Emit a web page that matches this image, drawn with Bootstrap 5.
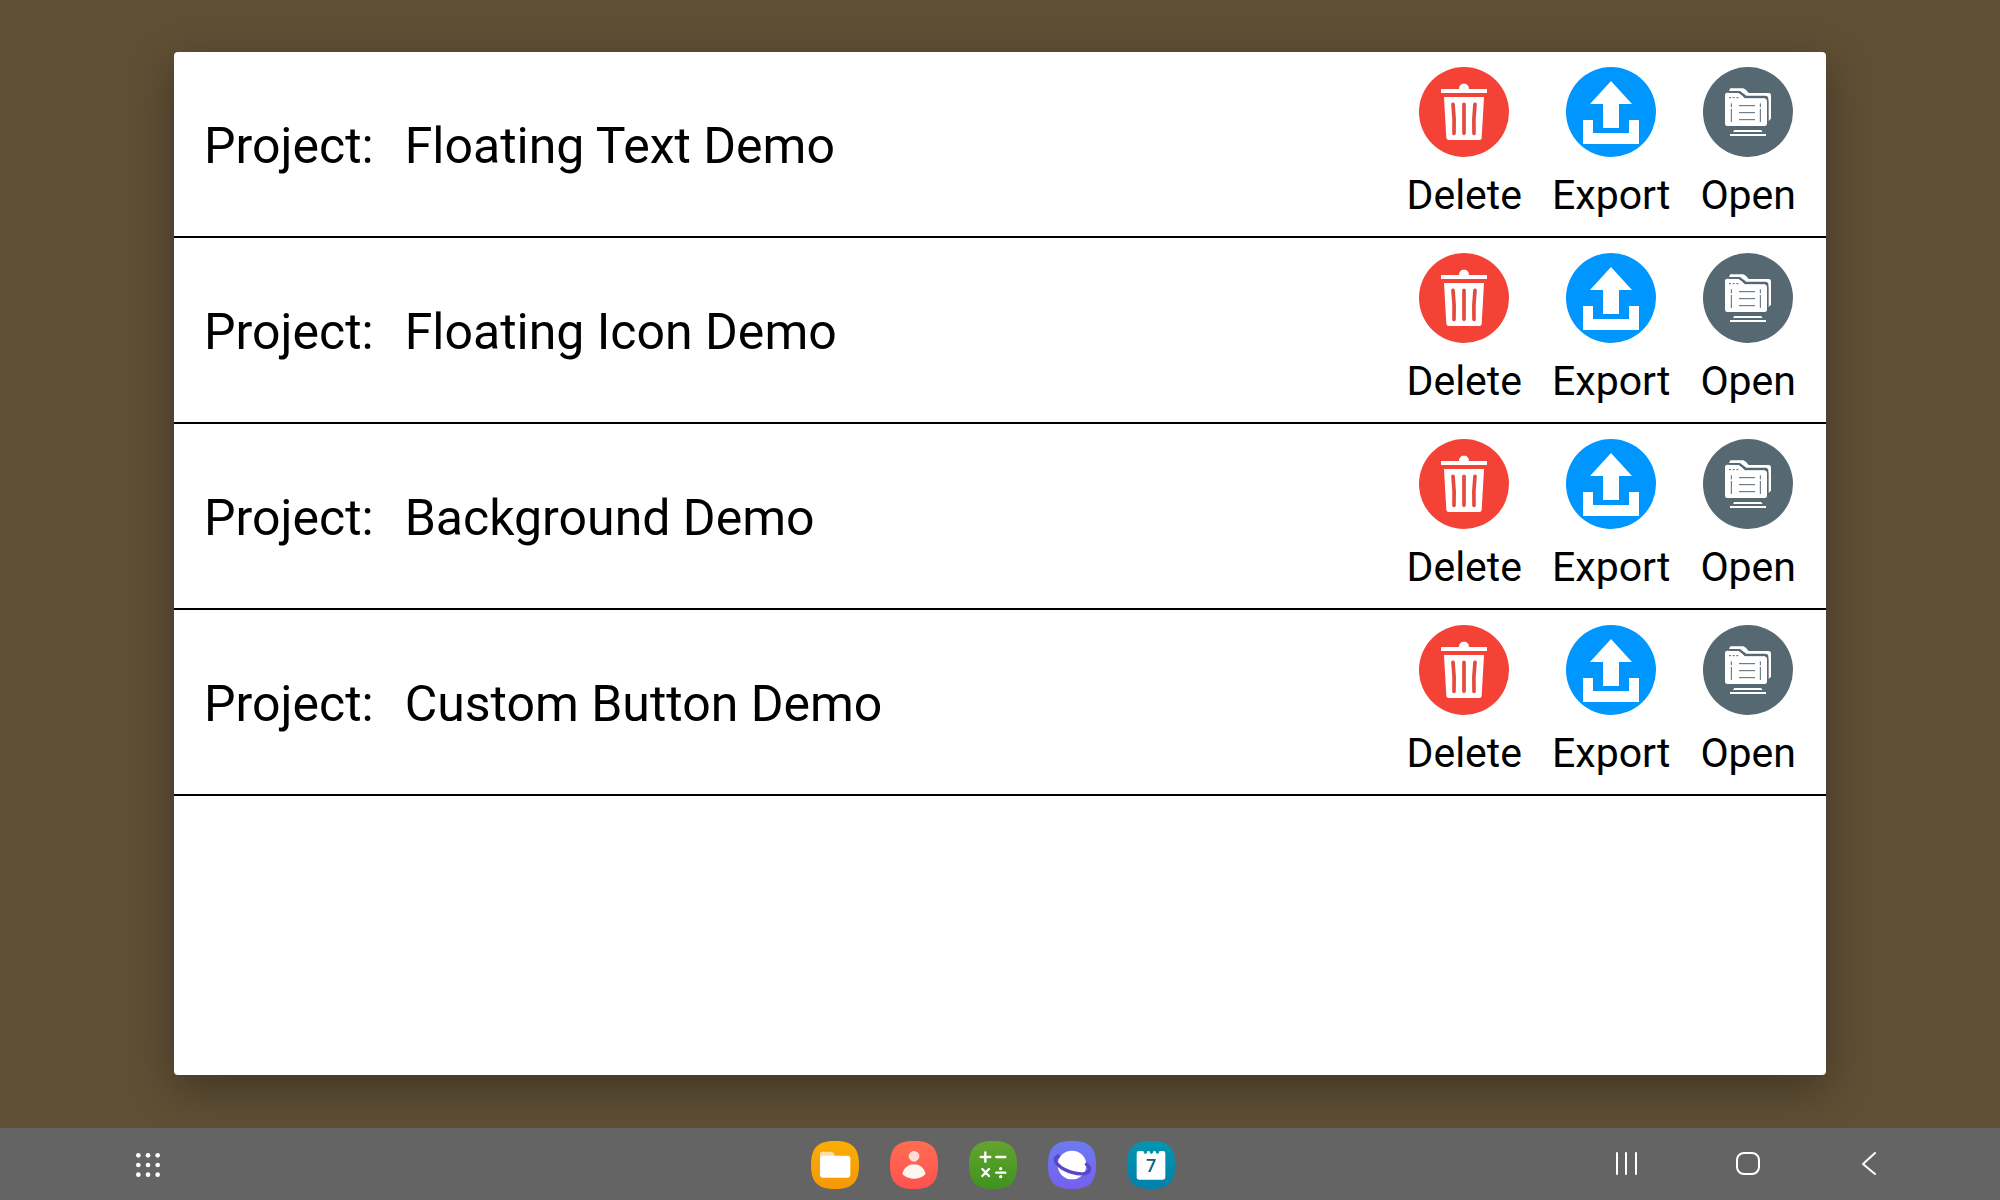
<!DOCTYPE html>
<html lang="en">
<head>
<meta charset="utf-8">
<meta name="viewport" content="width=device-width, initial-scale=1">
<title>Projects</title>
<link href="https://cdn.jsdelivr.net/npm/bootstrap@5.3.0/dist/css/bootstrap.min.css" rel="stylesheet">
<style>
  body { background: #5f4f35; font-family: Roboto, "Noto Sans", sans-serif; color: #000; }
  .stage { padding: 52px 174px 53px; }
  .panel { border-radius: 4px; box-shadow: 0 14px 46px rgba(0, 0, 0, .32); }
  .project-row { border-bottom: 2px solid #000; padding: 15px 30px 17px; gap: 30px; }
  .project-title { font-size: 50px; line-height: 60px; gap: 31px; padding-top: 6px; }
  .actions { gap: 30px; }
  .action { font-size: 41px; line-height: 47px; gap: 15px; color: #000; }
  .action svg { width: 90px; height: 90px; }
  .taskbar { background: #646464; height: 72px; padding-right: 15px; grid-template-columns: 1fr auto 1fr; }
  .side-start { padding-left: 136px; padding-top: 2px; }
  .side-end { padding-right: 104px; gap: 97px; }
  .apps { gap: 31px; padding-top: 2px; }
  .apps svg { width: 48px; height: 48px; }
  .side svg { width: 24px; height: 24px; }
  .taskbar button, .action { background: none; border: 0; padding: 0; }
  .taskbar svg, .action svg { display: block; }
</style>
<script src="https://cdn.jsdelivr.net/npm/bootstrap@5.3.0/dist/js/bootstrap.bundle.min.js"></script>
</head>
<body>
<svg width="0" height="0" class="position-absolute" aria-hidden="true">
  <defs>
    <linearGradient id="gFiles" x2="0" y2="1"><stop stop-color="#f9ae05"/><stop offset="1" stop-color="#f79708"/></linearGradient>
    <linearGradient id="gPeople" x2="0" y2="1"><stop stop-color="#ff6d51"/><stop offset="1" stop-color="#ff5250"/></linearGradient>
    <linearGradient id="gCalc" x2="0" y2="1"><stop stop-color="#64a42f"/><stop offset="1" stop-color="#3f9220"/></linearGradient>
    <linearGradient id="gWeb" x2="0" y2="1"><stop stop-color="#6c7bf2"/><stop offset="1" stop-color="#7560ee"/></linearGradient>
    <linearGradient id="gCal" x2="0" y2="1"><stop stop-color="#0296b2"/><stop offset="1" stop-color="#0280aa"/></linearGradient>
    <path id="squircle" d="M72 0C124 0 144 20 144 72S124 144 72 144 0 124 0 72 20 0 72 0Z"/>
  </defs>
  <symbol id="delete" viewBox="0 0 270 270">
    <circle cx="135" cy="135" r="135" fill="#f44336"/>
    <path d="M66 66H120C120 56 126 50 135 50S150 56 150 66H204V78H66ZM75 90H195L188 213Q188 219 181 219H90Q83 219 82 213Z" fill="#fff"/>
    <path d="M102 112Q107 155 105 199M135 112V199M168 112Q163 155 165 199" fill="none" stroke="#e5493d" stroke-width="11" stroke-linecap="round"/>
  </symbol>
  <symbol id="export" viewBox="0 0 270 270">
    <circle cx="135" cy="135" r="135" fill="#0096ff"/>
    <path d="M135 42L198 111H159V183H111V111H72ZM51 159H81V198H189V159H219V231H51Z" fill="#fff"/>
  </symbol>
  <symbol id="open" viewBox="0 0 270 270">
    <circle cx="135" cy="135" r="135" fill="#566871"/>
    <path d="M78 72L82 64H121Q128 66 137 78H197Q204 78 204 85V155L196 163V92Q194 86 187 86H130L111 72Z" fill="#fff"/>
    <path d="M66 84Q66 77 73 77H107Q115 82 125 93H184Q191 94 192 101V170Q192 177 185 177H73Q66 177 66 170Z" fill="#fff"/>
    <path d="M77 76H107Q115 81 127 92H185Q194 93 195 102V162" fill="none" stroke="#566871" stroke-width="3"/>
    <path d="M78 92H84M89 92H95M100 92H106M85 109V121M85 126V165M172 109V121M172 126V165M108 116H156M108 137H156M108 158H156" fill="none" stroke="#566871" stroke-width="3"/>
    <path d="M94 189H174L179 195H90ZM81 201H189V207H81Z" fill="#fff"/>
  </symbol>
</svg>

<div class="d-flex flex-column min-vh-100">
  <main class="stage flex-grow-1 d-flex">
    <div class="panel bg-white flex-grow-1">
      <ul class="list-unstyled mb-0">
        <li class="project-row d-flex align-items-center justify-content-between">
          <div class="project-title d-flex"><span>Project:</span><span>Floating Text Demo</span></div>
          <div class="actions d-flex">
            <button type="button" class="action d-flex flex-column align-items-center"><svg aria-hidden="true"><use href="#delete"/></svg>Delete</button>
            <button type="button" class="action d-flex flex-column align-items-center"><svg aria-hidden="true"><use href="#export"/></svg>Export</button>
            <button type="button" class="action d-flex flex-column align-items-center"><svg aria-hidden="true"><use href="#open"/></svg>Open</button>
          </div>
        </li>
        <li class="project-row d-flex align-items-center justify-content-between">
          <div class="project-title d-flex"><span>Project:</span><span>Floating Icon Demo</span></div>
          <div class="actions d-flex">
            <button type="button" class="action d-flex flex-column align-items-center"><svg aria-hidden="true"><use href="#delete"/></svg>Delete</button>
            <button type="button" class="action d-flex flex-column align-items-center"><svg aria-hidden="true"><use href="#export"/></svg>Export</button>
            <button type="button" class="action d-flex flex-column align-items-center"><svg aria-hidden="true"><use href="#open"/></svg>Open</button>
          </div>
        </li>
        <li class="project-row d-flex align-items-center justify-content-between">
          <div class="project-title d-flex"><span>Project:</span><span>Background Demo</span></div>
          <div class="actions d-flex">
            <button type="button" class="action d-flex flex-column align-items-center"><svg aria-hidden="true"><use href="#delete"/></svg>Delete</button>
            <button type="button" class="action d-flex flex-column align-items-center"><svg aria-hidden="true"><use href="#export"/></svg>Export</button>
            <button type="button" class="action d-flex flex-column align-items-center"><svg aria-hidden="true"><use href="#open"/></svg>Open</button>
          </div>
        </li>
        <li class="project-row d-flex align-items-center justify-content-between">
          <div class="project-title d-flex"><span>Project:</span><span>Custom Button Demo</span></div>
          <div class="actions d-flex">
            <button type="button" class="action d-flex flex-column align-items-center"><svg aria-hidden="true"><use href="#delete"/></svg>Delete</button>
            <button type="button" class="action d-flex flex-column align-items-center"><svg aria-hidden="true"><use href="#export"/></svg>Export</button>
            <button type="button" class="action d-flex flex-column align-items-center"><svg aria-hidden="true"><use href="#open"/></svg>Open</button>
          </div>
        </li>
      </ul>
    </div>
  </main>

  <nav class="taskbar position-relative d-grid align-items-center" aria-label="Taskbar">
    <div class="side side-start d-flex">
      <button type="button" aria-label="All apps">
        <svg viewBox="0 0 72 72" fill="#fff"><circle cx="7" cy="7" r="7"/><circle cx="36" cy="7" r="7"/><circle cx="65" cy="7" r="7"/><circle cx="7" cy="36" r="7"/><circle cx="36" cy="36" r="7"/><circle cx="65" cy="36" r="7"/><circle cx="7" cy="65" r="7"/><circle cx="36" cy="65" r="7"/><circle cx="65" cy="65" r="7"/></svg>
      </button>
    </div>
    <div class="apps d-flex">
      <button type="button" aria-label="My Files">
        <svg viewBox="0 0 144 144"><use href="#squircle" fill="url(#gFiles)"/><path d="M27 39Q27 32 34 32H60Q68 32 70 40L72 60H27Z" fill="#fddfa1"/><rect x="27" y="44" width="91" height="66" rx="9" fill="#fff"/></svg>
      </button>
      <button type="button" aria-label="Contacts">
        <svg viewBox="0 0 144 144"><use href="#squircle" fill="url(#gPeople)"/><circle cx="72" cy="46" r="16" fill="#ffdcd6"/><path d="M38 95C44 79 56 70 72 70S100 79 106 95Q108 99 103 103C86 117 58 117 41 103Q36 99 38 95Z" fill="#fcf8f1"/></svg>
      </button>
      <button type="button" aria-label="Calculator">
        <svg viewBox="0 0 144 144"><use href="#squircle" fill="url(#gCalc)"/><g stroke="#fff" stroke-width="7" stroke-linecap="round"><path d="M35 48H64M49 34V62M82 48H109M40 84L60 105M60 84L40 105M82 95H109"/></g><circle cx="95" cy="83" r="5" fill="#fff"/><circle cx="95" cy="107" r="5" fill="#fff"/></svg>
      </button>
      <button type="button" aria-label="Internet">
        <svg viewBox="0 0 144 144"><use href="#squircle" fill="url(#gWeb)"/><circle cx="72" cy="72" r="43" fill="#fff"/><path d="M35 44C18 48 18 62 33 74C52 91 91 103 113 97C130 92 127 77 112 67" fill="none" stroke="#5a46c4" stroke-width="10"/></svg>
      </button>
      <button type="button" aria-label="Calendar">
        <svg viewBox="0 0 144 144"><use href="#squircle" fill="url(#gCal)"/><path d="M29 37Q29 30 36 30H49Q51 39 55 39T62 30H67Q69 39 73 39T80 30H85Q87 39 91 39T98 30H108Q115 30 115 37V108Q115 116 107 116H37Q29 116 29 108Z" fill="#fff"/><text x="72" y="94" text-anchor="middle" font-family="Roboto, sans-serif" font-size="54" font-weight="500" fill="#0b5f7a">7</text></svg>
      </button>
    </div>
    <div class="side side-end d-flex justify-content-end">
      <button type="button" aria-label="Recents">
        <svg viewBox="0 0 24 24" stroke="#fff" stroke-width="2" stroke-linecap="round"><path d="M2 1V22M11 1V22M21 1V22"/></svg>
      </button>
      <button type="button" aria-label="Home">
        <svg viewBox="0 0 24 24" fill="none" stroke="#fff" stroke-width="2"><rect x="1" y="1" width="22" height="21" rx="7"/></svg>
      </button>
      <button type="button" aria-label="Back">
        <svg viewBox="0 0 24 24" fill="none" stroke="#fff" stroke-width="2" stroke-linecap="round" stroke-linejoin="round"><path d="M18 1L6 12L18 22"/></svg>
      </button>
    </div>
  </nav>
</div>
</body>
</html>
